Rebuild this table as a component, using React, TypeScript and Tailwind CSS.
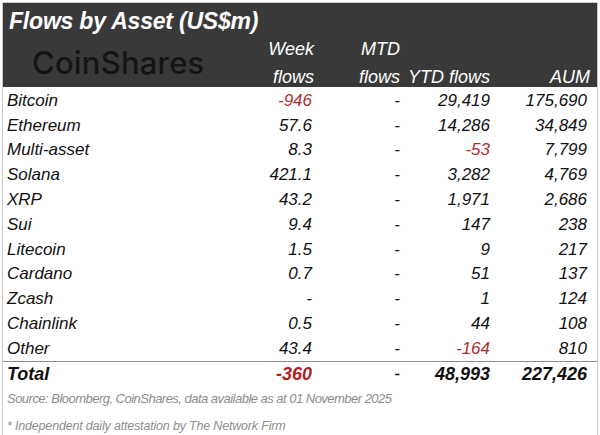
const rows: { name: string; week: string; ytd: string; aum: string; weekNeg?: boolean; ytdNeg?: boolean }[] = [
  { name: "Bitcoin", week: "-946", ytd: "29,419", aum: "175,690", weekNeg: true },
  { name: "Ethereum", week: "57.6", ytd: "14,286", aum: "34,849" },
  { name: "Multi-asset", week: "8.3", ytd: "-53", aum: "7,799", ytdNeg: true },
  { name: "Solana", week: "421.1", ytd: "3,282", aum: "4,769" },
  { name: "XRP", week: "43.2", ytd: "1,971", aum: "2,686" },
  { name: "Sui", week: "9.4", ytd: "147", aum: "238" },
  { name: "Litecoin", week: "1.5", ytd: "9", aum: "217" },
  { name: "Cardano", week: "0.7", ytd: "51", aum: "137" },
  { name: "Zcash", week: "-", ytd: "1", aum: "124" },
  { name: "Chainlink", week: "0.5", ytd: "44", aum: "108" },
  { name: "Other", week: "43.4", ytd: "-164", aum: "810", ytdNeg: true },
];

const grid = "grid grid-cols-[1fr_100px_88px_90px_97px] pr-[10px]";

export default function App() {
  return (
    <div className="w-[600px] h-[435px] bg-white pt-[2px] pl-[2px] overflow-hidden" style={{ fontFamily: '"Liberation Sans", Arial, sans-serif' }}>
      <div className="w-[596px] h-[440px] border-l border-r border-t border-[#c9c9c9]">
        {/* dark header */}
        <div className="bg-[#393939] h-[84px] text-white italic">
          <div className="pl-[6px] pt-[5px] text-[23px] font-bold leading-[26px] tracking-[-0.2px]">Flows by Asset (US$m)</div>
          <div className={`${grid} text-[18px] leading-[28px] mt-[1px]`}>
            <div className="flex items-center pl-[29px] pb-[2px]">
              <span className="not-italic font-medium text-[31px] leading-none text-[#141414] tracking-[0.2px]" style={{ fontFamily: "Inter, sans-serif" }}>
                CoinShares
              </span>
            </div>
            <div className="text-right mr-[-2px]">Week<br />flows</div>
            <div className="text-right">MTD<br />flows</div>
            <div className="text-right flex flex-col justify-end">YTD flows</div>
            <div className="text-right flex flex-col justify-end mr-[-3px]">AUM</div>
          </div>
        </div>

        {/* body */}
        <div className="pt-[1px] italic text-[17px] text-[#111]">
          {rows.map((r) => (
            <div key={r.name} className={`${grid} h-[24.8px] items-center leading-none`}>
              <div className="pl-[4px]">{r.name}</div>
              <div className={`text-right ${r.weekNeg ? "text-[#a8312f]" : ""}`}>{r.week}</div>
              <div className="text-right">-</div>
              <div className={`text-right ${r.ytdNeg ? "text-[#a8312f]" : ""}`}>{r.ytd}</div>
              <div className="text-right">{r.aum}</div>
            </div>
          ))}
          <div className={`${grid} h-[25px] items-center leading-none font-bold text-[18px] border-t-[1.5px] border-[#8c8c8c]`}>
            <div className="pl-[4px]">Total</div>
            <div className="text-right text-[#b3211f]">-360</div>
            <div className="text-right font-normal">-</div>
            <div className="text-right">48,993</div>
            <div className="text-right">227,426</div>
          </div>
          <div className="pl-[4px] pt-[3px] text-[13px] text-[#8d8d8d] tracking-[-0.52px] leading-[20px]">
            Source: Bloomberg, CoinShares, data available as at 01 November 2025
          </div>
          <div className="pl-[4px] pt-[7px] text-[12.5px] text-[#8d8d8d] tracking-[-0.18px] leading-[20px]">
            * Independent daily attestation by The Network Firm
          </div>
        </div>
      </div>
    </div>
  );
}
